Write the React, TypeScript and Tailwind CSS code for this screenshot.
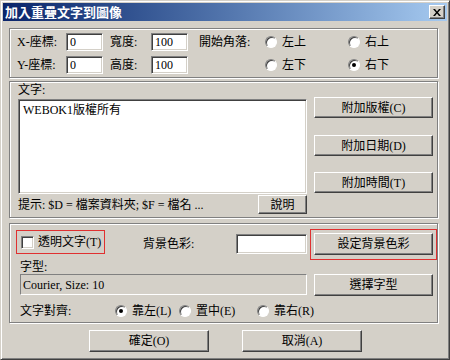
import type { ReactNode } from "react";

const FONT = "font-['Liberation_Serif','Noto_Sans_CJK_TC',serif]";

function Btn({ children, className = "" }: { children: ReactNode; className?: string }) {
  return (
    <div
      className={`flex items-center justify-center border border-t-white border-l-white border-r-[#404040] border-b-[#404040] bg-[#d4d0c8] shadow-[inset_-1px_-1px_#808080] text-[12px] text-black ${className}`}
    >
      {children}
    </div>
  );
}

function Field({ value = "", className = "" }: { value?: string; className?: string }) {
  return (
    <div
      className={`flex items-center border border-t-[#808080] border-l-[#808080] border-r-white border-b-white bg-white pl-[3px] shadow-[inset_1px_1px_#404040,inset_-1px_-1px_#d4d0c8] text-[12px] leading-none ${className}`}
    >
      {value}
    </div>
  );
}

function Radio({ label, checked = false, className = "" }: { label: string; checked?: boolean; className?: string }) {
  return (
    <div className={`flex items-center ${className}`}>
      <span className="flex h-[12px] w-[12px] shrink-0 items-center justify-center rounded-full border border-t-[#808080] border-l-[#808080] border-r-white border-b-white bg-white shadow-[inset_1px_1px_#404040]">
        {checked && <span className="h-[4px] w-[4px] rounded-full bg-black" />}
      </span>
      <span className="ml-[5px] text-[12px] leading-none">{label}</span>
    </div>
  );
}

function Group({ children, className = "" }: { children: ReactNode; className?: string }) {
  return (
    <div className={`w-[429px] shrink-0 border border-[#808080] shadow-[inset_1px_1px_#fff,1px_1px_#fff] ${className}`}>
      {children}
    </div>
  );
}

export default function App() {
  return (
    <div
      className={`flex h-[360px] w-[450px] flex-col border border-t-[#d4d0c8] border-l-[#d4d0c8] border-r-[#404040] border-b-[#404040] bg-[#d4d0c8] p-[2px] text-black shadow-[inset_1px_1px_#fff,inset_-1px_-1px_#808080] ${FONT}`}
    >
      {/* title bar */}
      <div className="flex h-[18px] shrink-0 items-center justify-between bg-linear-to-r from-[#0a246a] to-[#a6caf0] pl-[2px] pr-[2px]">
        <span className="text-[13px] font-bold leading-none text-white">加入重疊文字到圖像</span>
        <div className="flex h-[14px] w-[16px] items-center justify-center border border-t-white border-l-white border-r-[#404040] border-b-[#404040] bg-[#d4d0c8] shadow-[inset_-1px_-1px_#808080]">
          <svg width="8" height="7" viewBox="0 0 8 7">
            <path d="M0 0h2l2 2.5L6 0h2L5 3.5 8 7H6L4 4.5 2 7H0l3-3.5z" fill="#000" />
          </svg>
        </div>
      </div>

      <div className="ml-[6px] flex flex-col">
        {/* position */}
        <Group className="mt-[7px] h-[50px]">
          <div className="flex flex-col gap-[5px] pt-[4px]">
            <div className="flex h-[18px] items-center text-[12px]">
              <span className="ml-[7px] w-[49px]">X-座標:</span>
              <Field value="0" className="h-[18px] w-[37px]" />
              <span className="ml-[7px] w-[41px]">寬度:</span>
              <Field value="100" className="h-[18px] w-[37px]" />
              <span className="ml-[11px] w-[66px]">開始角落:</span>
              <Radio label="左上" className="w-[83px]" />
              <Radio label="右上" />
            </div>
            <div className="flex h-[18px] items-center text-[12px]">
              <span className="ml-[7px] w-[49px]">Y-座標:</span>
              <Field value="0" className="h-[18px] w-[37px]" />
              <span className="ml-[7px] w-[41px]">高度:</span>
              <Field value="100" className="h-[18px] w-[37px]" />
              <span className="ml-[11px] w-[66px]" />
              <Radio label="左下" className="w-[83px]" />
              <Radio label="右下" checked />
            </div>
          </div>
        </Group>

        {/* text */}
        <Group className="mt-[3px] h-[137px]">
          <div className="flex">
            <div className="ml-[8px] flex w-[289px] flex-col">
              <span className="mt-[1px] h-[14px] text-[12px] leading-[14px]">文字:</span>
              <div className="mt-[2px] h-[95px] border border-t-[#808080] border-l-[#808080] border-r-white border-b-white bg-white px-[4px] pt-[3px] text-[12px] leading-[14px] shadow-[inset_1px_1px_#404040,inset_-1px_-1px_#d4d0c8]">
                WEBOK1版權所有
              </div>
              <div className="mt-[1px] flex h-[19px] items-center justify-between">
                <span className="text-[12px] leading-none">提示: $D = 檔案資料夾; $F = 檔名 ...</span>
                <Btn className="h-[19px] w-[49px]">說明</Btn>
              </div>
            </div>
            <div className="ml-[7px] flex w-[119px] flex-col pt-[15px]">
              <Btn className="h-[21px]">附加版權(C)</Btn>
              <Btn className="mt-[17px] h-[21px]">附加日期(D)</Btn>
              <Btn className="mt-[16px] h-[21px]">附加時間(T)</Btn>
            </div>
          </div>
        </Group>

        {/* background / font / align */}
        <Group className="mt-[5px] h-[100px]">
          <div className="flex flex-col">
            <div className="mt-[5px] flex h-[32px] items-start text-[12px]">
              <div className="ml-[6px] mt-[1px] flex h-[24px] w-[89px] items-center border border-[#e03030] pl-[4px]">
                <span className="h-[13px] w-[13px] border border-t-[#808080] border-l-[#808080] border-r-white border-b-white bg-white shadow-[inset_1px_1px_#404040,inset_-1px_-1px_#d4d0c8]" />
                <span className="ml-[4px] leading-none">透明文字(T)</span>
              </div>
              <span className="ml-[38px] mt-[9px] w-[93px] leading-none">背景色彩:</span>
              <Field className="mt-[5px] h-[20px] w-[71px]" />
              <div className="ml-[3px] h-[31px] w-[127px] border border-[#e03030] pl-[3px] pt-[3px]">
                <Btn className="h-[22px] w-[119px]">設定背景色彩</Btn>
              </div>
            </div>
            <span className="ml-[10px] h-[13px] text-[12px] leading-[13px]">字型:</span>
            <div className="flex h-[23px] items-start">
              <div className="ml-[10px] flex h-[21px] w-[287px] items-center border border-t-[#808080] border-l-[#808080] border-r-white border-b-white pl-[2px] text-[12px] leading-none">
                Courier, Size: 10
              </div>
              <Btn className="ml-[7px] h-[22px] w-[119px]">選擇字型</Btn>
            </div>
            <div className="mt-[6px] flex h-[16px] items-center text-[12px]">
              <span className="ml-[10px] w-[95px] leading-none">文字對齊:</span>
              <Radio label="靠左(L)" checked className="w-[64px]" />
              <Radio label="置中(E)" className="w-[78px]" />
              <Radio label="靠右(R)" />
            </div>
          </div>
        </Group>
      </div>

      {/* ok / cancel */}
      <div className="ml-[86px] mt-[7px] flex gap-[33px]">
        <Btn className="h-[22px] w-[120px]">確定(O)</Btn>
        <Btn className="h-[22px] w-[120px]">取消(A)</Btn>
      </div>
    </div>
  );
}
